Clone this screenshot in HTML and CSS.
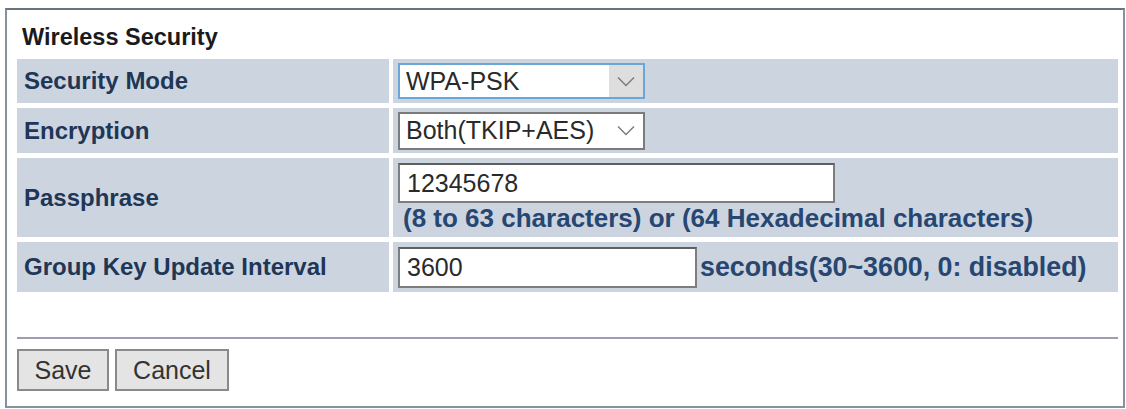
FILE: index.html
```html
<!DOCTYPE html>
<html lang="en">
<head>
	<meta charset="UTF-8">
	<title>Wireless Security</title>
	<link rel="stylesheet" href="styles.css">
</head>
<body>
	<div class="frame">
		<h1 class="title">Wireless Security</h1>

		<div class="form">
			<div class="label">Security Mode</div>
			<div class="value">
				<span class="select select--focus">
					<span class="select__text">WPA-PSK</span>
					<span class="select__arrow">
						<svg width="18" height="11" viewBox="0 0 18 11"><path d="M1 1.5 L9 9.5 L17 1.5" fill="none" stroke="#7a7a7a" stroke-width="1.4"/></svg>
					</span>
				</span>
			</div>

			<div class="label">Encryption</div>
			<div class="value">
				<span class="select">
					<span class="select__text">Both(TKIP+AES)</span>
					<span class="select__arrow">
						<svg width="18" height="11" viewBox="0 0 18 11"><path d="M1 1.5 L9 9.5 L17 1.5" fill="none" stroke="#7a7a7a" stroke-width="1.4"/></svg>
					</span>
				</span>
			</div>

			<div class="label">Passphrase</div>
			<div class="value value--stack">
				<input class="input input--pass" type="text" value="12345678">
				<span class="note">(8 to 63 characters) or (64 Hexadecimal characters)</span>
			</div>

			<div class="label">Group Key Update Interval</div>
			<div class="value value--inline">
				<input class="input input--short" type="text" value="3600">
				<span class="note">seconds(30~3600, 0: disabled)</span>
			</div>
		</div>

		<div class="divider"></div>

		<div class="buttons">
			<button class="btn btn--save">Save</button>
			<button class="btn btn--cancel">Cancel</button>
		</div>
	</div>
</body>
</html>
```

FILE: styles.css
```css
html, body {
	margin: 0;
	padding: 0;
	background: #fff;
}
body {
	font-family: "Liberation Sans", Arial, sans-serif;
	width: 1126px;
	height: 409px;
	overflow: hidden;
}
.frame {
	box-sizing: border-box;
	margin: 8px 1px 0 5px;
	height: 400px;
	border: 2px solid #8592a0;
	border-top-color: #69737e;
	padding: 14px 5px 0 10px;
}
.title {
	margin: 0 0 8px 5px;
	font-size: 23.5px;
	line-height: 27px;
	font-weight: bold;
	color: #1b1b1b;
}
.form {
	display: grid;
	grid-template-columns: 372px 1fr;
	grid-template-rows: 44px 45px 79px 50px;
	gap: 5px 4px;
}
.label,
.value {
	background: #ccd5df;
	display: flex;
	align-items: center;
}
.label {
	padding-left: 7px;
	font-size: 24px;
	font-weight: bold;
	color: #1f3656;
}
.value {
	padding-left: 5px;
}
.value--stack {
	flex-direction: column;
	align-items: flex-start;
	justify-content: flex-start;
	padding-top: 5px;
}
.value--inline {
	gap: 3px;
}

.select {
	position: relative;
	box-sizing: border-box;
	display: flex;
	align-items: center;
	width: 247px;
	height: 38px;
	border: 2px solid #7b7b7b;
	background: #fff;
	font-size: 25px;
	color: #2a2a2a;
}
.select--focus {
	height: 36px;
	border-color: #6aa7d8;
}
.select__text {
	padding-left: 6px;
}
.select__arrow {
	position: absolute;
	top: 0;
	right: 0;
	bottom: 0;
	width: 34px;
	display: flex;
	align-items: center;
	justify-content: center;
}
.select--focus .select__arrow {
	background: #dedede;
}

.input {
	box-sizing: border-box;
	margin: 0;
	border: 2px solid #7d7d7d;
	border-top-color: #5f5f5f;
	background: #fff;
	font-family: "Liberation Sans", Arial, sans-serif;
	font-size: 25px;
	color: #2a2a2a;
	padding: 0 0 0 7px;
	outline: none;
}
.input--pass {
	width: 437px;
	height: 40px;
}
.input--short {
	width: 299px;
	height: 41px;
}
.note {
	font-size: 26px;
	font-weight: bold;
	color: #274671;
	line-height: 30px;
}
.value--stack .note {
	margin-left: 5px;
}
.value--inline .note {
	font-size: 26.8px;
}

.divider {
	margin-top: 45px;
	height: 2px;
	background: #9d9db3;
}
.buttons {
	display: flex;
	gap: 6px;
	margin-top: 10px;
}
.btn {
	box-sizing: border-box;
	height: 42px;
	margin: 0;
	border: 2px solid #8a8a8a;
	background: #e4e4e4;
	font-family: "Liberation Sans", Arial, sans-serif;
	font-size: 25px;
	color: #333;
	padding: 0;
}
.btn--save {
	width: 92px;
}
.btn--cancel {
	width: 114px;
}
```
